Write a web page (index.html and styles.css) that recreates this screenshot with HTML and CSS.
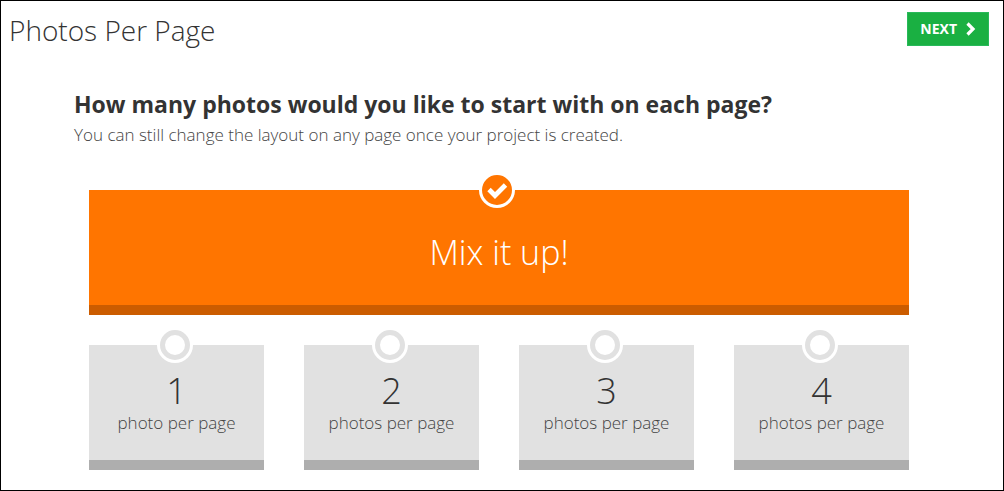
FILE: index.html
```html
<!DOCTYPE html>
<html lang="en">
<head>
<meta charset="utf-8">
<meta name="viewport" content="width=device-width, initial-scale=1">
<title>Photos Per Page</title>
<link rel="stylesheet" href="styles.css">
</head>
<body>
<div class="page">
  <header class="header">
    <h1 class="title">Photos Per Page</h1>
    <button class="next" type="button">NEXT
      <svg class="chevron" viewBox="0 0 10 14" aria-hidden="true"><path d="M1.5 1.5L7 7l-5.5 5.5" fill="none" stroke="currentColor" stroke-width="3.2"/></svg>
    </button>
  </header>
  <main class="content">
    <h2 class="question" id="question">How many photos would you like to start with on each page?</h2>
    <p class="hint">You can still change the layout on any page once your project is created.</p>
    <div class="options" role="radiogroup" aria-labelledby="question">
      <label class="card card-mix">
        <input class="radio" type="radio" name="layout" value="mix" checked>
        <svg class="check" viewBox="0 0 30 30" aria-hidden="true"><path d="M7 14.5l6 6L23.500 10" fill="none" stroke="currentColor" stroke-width="4.8"/></svg>
        <span class="mix">Mix it up!</span>
      </label>
      <label class="card">
        <input class="radio" type="radio" name="layout" value="1">
        <span class="count">1</span>
        <span class="unit">photo per page</span>
      </label>
      <label class="card">
        <input class="radio" type="radio" name="layout" value="2">
        <span class="count">2</span>
        <span class="unit">photos per page</span>
      </label>
      <label class="card">
        <input class="radio" type="radio" name="layout" value="3">
        <span class="count">3</span>
        <span class="unit">photos per page</span>
      </label>
      <label class="card">
        <input class="radio" type="radio" name="layout" value="4">
        <span class="count">4</span>
        <span class="unit">photos per page</span>
      </label>
    </div>
  </main>
</div>
</body>
</html>
```
FILE: styles.css
```css
* {
  box-sizing: border-box;
}

body {
  margin: 0;
  background: #fff;
  color: #333;
  font-family: "Open Sans", "Noto Sans", sans-serif;
}

.page {
  min-height: 100vh;
  padding: 11px 14px 20px 8px;
  border: 1px solid #000;
}

.header {
  display: flex;
  align-items: flex-start;
  justify-content: space-between;
}

.title {
  margin: 0;
  font-size: 28px;
  font-weight: 300;
  line-height: 36px;
}

.next {
  display: flex;
  align-items: center;
  gap: 9px;
  height: 34px;
  padding: 0 12px;
  border: 1px solid #28b95a;
  background: #1ab042;
  color: #fff;
  font: 700 14px/32px "Open Sans", "Noto Sans", sans-serif;
}

.chevron {
  width: 10px;
  height: 14px;
}

.content {
  max-width: 850px;
  margin: 40px auto 0;
}

.question {
  margin: 0;
  font-size: 23px;
  font-weight: 700;
  line-height: 32px;
}

.hint {
  margin: 0;
  color: #444;
  font-size: 17px;
  font-weight: 300;
  line-height: 30px;
}

.options {
  display: grid;
  grid-template-columns: repeat(4, 1fr);
  gap: 30px 40px;
  padding: 40px 15px 0;
}

.card {
  position: relative;
  display: flex;
  flex-direction: column;
  align-items: center;
  justify-content: center;
  min-height: 125px;
  border-bottom: 10px solid #aeaeae;
  background: #e1e1e1;
}

.card-mix {
  grid-column: 1 / -1;
  padding-top: 8px;
  border-color: #cb5c00;
  background: #ff7500;
  color: #fff;
}

.mix {
  font-size: 34px;
  font-weight: 300;
  line-height: 40px;
}

.count {
  font-size: 36px;
  font-weight: 300;
  line-height: 40px;
}

.unit {
  color: #444;
  font-size: 17px;
  font-weight: 300;
  line-height: 24px;
}

.radio,
.check {
  position: absolute;
  top: -15px;
  left: 50%;
  width: 30px;
  height: 30px;
  margin: 0 0 0 -17px;
  border-radius: 50%;
}

.radio {
  appearance: none;
  border: 5px solid #e1e1e1;
  background: #fff;
  box-shadow: 0 0 0 3px #fff;
}

.radio:checked {
  border-color: #ff7500;
  background: #ff7500;
}
```
